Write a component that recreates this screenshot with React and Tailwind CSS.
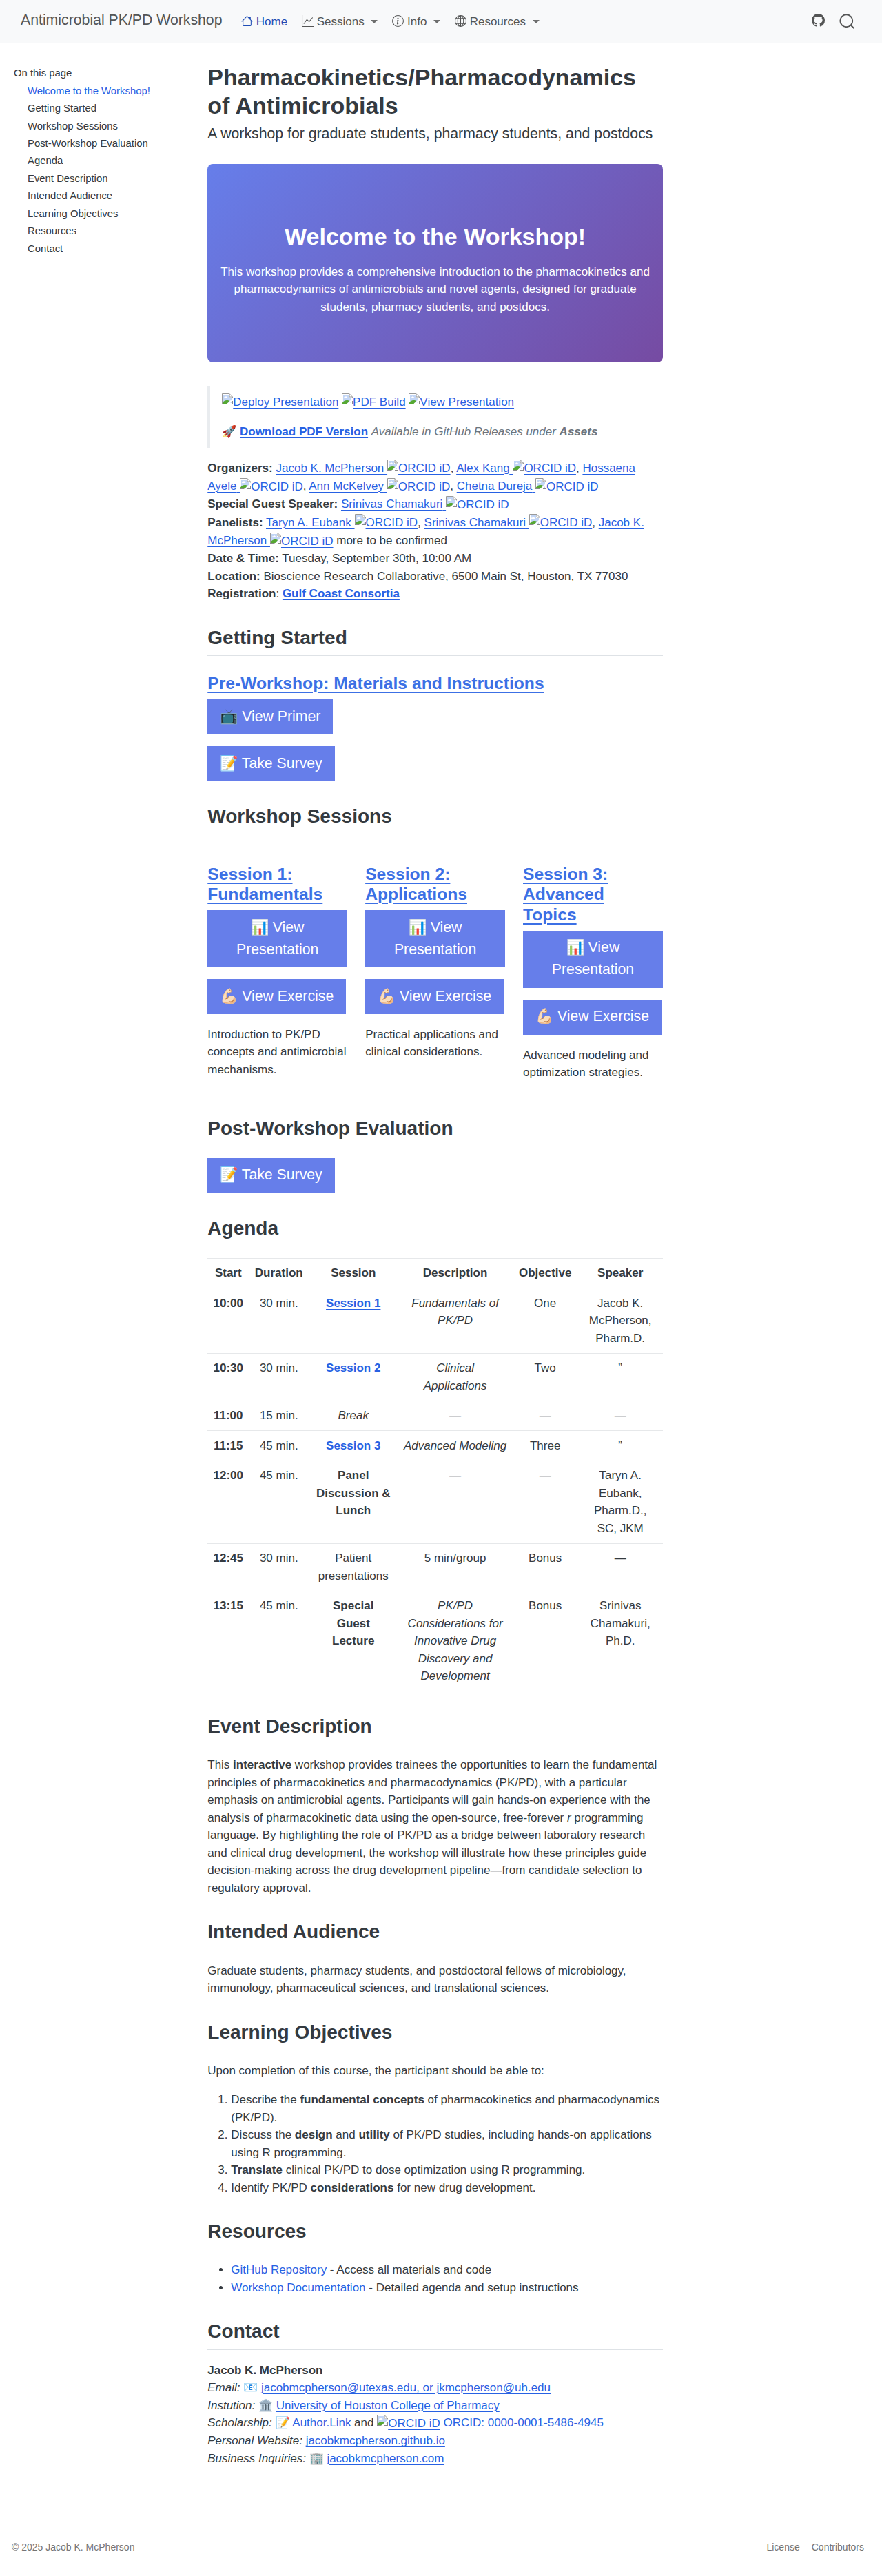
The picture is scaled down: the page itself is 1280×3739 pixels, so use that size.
import { BsHouse, BsGraphUp, BsInfoCircle, BsGlobe, BsGithub } from "react-icons/bs";

const linkCls = "text-[#2761e3] underline decoration-1 underline-offset-[3px]";

function A({ children, className = "" }) {
  return <a className={`${linkCls} ${className}`}>{children}</a>;
}

function BrokenIcon() {
  return (
    <svg width="16" height="16" viewBox="0 0 16 16" className="float-left block">
      <path d="M0 0H11L16 5V16H0Z" fill="#fff" />
      <path d="M2 2H10V6H14V14H2Z" fill="#c3d6f6" />
      <path d="M3 6.5C3 5.5 4 5.2 4.6 5.4C5 4 7 4 7.3 5.3C8.4 5.2 8.6 6.6 8 7H3.4Z" fill="#fff" />
      <path d="M1 15V13.5C2.5 11 5 9.8 7.5 10C9 10.1 10 10.4 11 11L7.5 15Z" fill="#56a832" />
      <path d="M0.5 16V0.5H11L15.5 5V6.5" fill="none" stroke="#9a9a9a" />
      <path d="M11 0.8V5H15.2" fill="none" stroke="#9a9a9a" />
      <path d="M0 15.5H6.5M11 15.5H16M15.5 11V16" fill="none" stroke="#8a8a8a" />
      <path d="M7 16L16 6.8V10L10 16Z" fill="#fff" />
    </svg>
  );
}

function Alt({ children }) {
  return (
    <span className="inline-block align-middle">
      <BrokenIcon />
      <span className={linkCls}>{children}</span>
    </span>
  );
}

function Person({ name }) {
  return (
    <>
      <A>{name} </A>
      <Alt>ORCID iD</Alt>
    </>
  );
}

function H2({ children }) {
  return (
    <h2 className="mt-[34px] mb-[17px] border-b border-[#dee2e6] pb-[8.5px] text-[28.05px] leading-[1.2] font-bold text-[#343a40]">
      {children}
    </h2>
  );
}

function H3({ children }) {
  return (
    <h3 className="mt-[25.5px] mb-[8.5px] pr-[2px] text-[24.65px] leading-[1.2] font-bold opacity-90">
      <a className="text-[#2761e3] underline decoration-2 underline-offset-[3.5px]">{children}</a>
    </h3>
  );
}

function Btn({ children }) {
  return (
    <p className="mb-[17px] flex">
      <a className="border border-[#667eea] bg-[#667eea] px-[17px] py-[8.5px] text-center text-[21.25px] leading-[1.5] text-white">
        {children}
      </a>
    </p>
  );
}

function NavItem({ Icon, label, active, caret }) {
  return (
    <a className={`flex items-center px-[10.3px] ${active ? "text-[#1f4eb6]" : "text-[#545555]"}`}>
      <Icon className="mr-[5px] mb-[2px] size-[17px]" />
      <span>{label}</span>
      {caret && (
        <span className="ml-[9.7px] border-x-[5px] border-t-[5px] border-x-transparent border-t-[#6d6e6e]" />
      )}
    </a>
  );
}

const toc = [
  "Welcome to the Workshop!",
  "Getting Started",
  "Workshop Sessions",
  "Post-Workshop Evaluation",
  "Agenda",
  "Event Description",
  "Intended Audience",
  "Learning Objectives",
  "Resources",
  "Contact",
];

const sessions = [
  ["Session 1: Fundamentals", "Introduction to PK/PD concepts and antimicrobial mechanisms."],
  ["Session 2: Applications", "Practical applications and clinical considerations."],
  ["Session 3: Advanced Topics", "Advanced modeling and optimization strategies."],
];

const agenda = [
  ["10:00", "30 min.", <A>Session 1</A>, <em>Fundamentals of PK/PD</em>, "One", "Jacob K. McPherson, Pharm.D."],
  ["10:30", "30 min.", <A>Session 2</A>, <em>Clinical Applications</em>, "Two", "”"],
  ["11:00", "15 min.", <em className="font-normal">Break</em>, "—", "—", "—"],
  ["11:15", "45 min.", <A>Session 3</A>, <em>Advanced Modeling</em>, "Three", "”"],
  ["12:00", "45 min.", "Panel Discussion & Lunch", "—", "—", "Taryn A. Eubank, Pharm.D., SC, JKM"],
  ["12:45", "30 min.", <span className="font-normal">Patient presentations</span>, "5 min/group", "Bonus", "—"],
  [
    "13:15",
    "45 min.",
    "Special Guest Lecture",
    <em>PK/PD Considerations for Innovative Drug Discovery and Development</em>,
    "Bonus",
    "Srinivas Chamakuri, Ph.D.",
  ],
];

const cellCls = ["px-0 font-bold", "px-[8.5px]", "px-[8.5px] font-bold", "px-[8.5px]", "px-[8.5px]", "px-[8.5px]"];

export default function App() {
  return (
    <div className="flex h-[3739px] flex-col bg-white font-['Liberation_Sans',Arial,sans-serif] text-[17px] leading-[1.5] text-[#343a40]">
      <header className="flex h-[62px] shrink-0 items-center bg-[#f8f9fa] pl-[30px] text-[#545555]">
        <span className="-mt-[2px] mr-[17px] text-[21.25px]">Antimicrobial PK/PD Workshop</span>
        <nav className="flex pt-[1.4px]">
          <NavItem Icon={BsHouse} label="Home" active />
          <NavItem Icon={BsGraphUp} label="Sessions" caret />
          <NavItem Icon={BsInfoCircle} label="Info" caret />
          <NavItem Icon={BsGlobe} label="Resources" caret />
        </nav>
        <div className="mr-[39px] ml-auto flex items-center gap-[20px]">
          <BsGithub className="mb-[3px] size-[19px]" />
          <svg width="24" height="24" viewBox="0 0 24 24" fill="none" stroke="currentColor" strokeWidth="1.9">
            <circle cx="11.3" cy="11.2" r="9" />
            <path d="M17.6 17.5L22.6 22.4" />
          </svg>
        </div>
      </header>

      <div className="flex grow">
        <aside className="w-[301.25px] shrink-0 pt-[33px] pl-[20px] text-[14.875px]">
          <h2 className="leading-[22px]">On this page</h2>
          <ul className="mt-[2px] ml-[13px]">
            {toc.map((t, i) => (
              <li
                key={t}
                className={`flex h-[25.47px] items-center border-l pl-[6px] ${
                  i === 0 ? "border-[#2761e3] text-[#2761e3]" : "border-[#ebebeb]"
                }`}
              >
                {t}
              </li>
            ))}
          </ul>
        </aside>

        <main className="w-[660.7px] pt-[30px]">
          <h1 className="text-[34px] leading-[1.2] font-bold">
            Pharmacokinetics/Pharmacodynamics of Antimicrobials
          </h1>
          <p className="mt-[5px] text-[21.25px] leading-[1.5]">
            A workshop for graduate students, pharmacy students, and postdocs
          </p>

          <section className="mt-[27.6px] h-[287.7px] rounded-[8px] bg-[linear-gradient(135deg,#667eea_0%,#764ba2_100%)] px-[17px] pt-[85px] text-center text-white">
            <h1 className="mb-[17.7px] text-[34px] leading-[1.2] font-bold">Welcome to the Workshop!</h1>
            <p>
              This workshop provides a comprehensive introduction to the pharmacokinetics and pharmacodynamics of
              antimicrobials and novel agents, designed for graduate students, pharmacy students, and postdocs.
            </p>
          </section>

          <blockquote className="mt-[34px] mb-[17px] border-l-[4.25px] border-[#e9ecef] py-[10.6px] pl-[17px] text-[#6c757d]">
            <p className="mb-[17px]">
              <Alt>Deploy Presentation</Alt> <Alt>PDF Build</Alt> <Alt>View Presentation</Alt>
            </p>
            <p>
              🚀 <A className="font-bold">Download PDF Version</A>{" "}
              <em>
                Available in GitHub Releases under <strong>Assets</strong>
              </em>
            </p>
          </blockquote>

          <p>
            <strong>Organizers:</strong> <Person name="Jacob K. McPherson" />, <Person name="Alex Kang" />,{" "}
            <Person name="Hossaena Ayele" />, <Person name="Ann McKelvey" />, <Person name="Chetna Dureja" />
            <br />
            <strong>Special Guest Speaker:</strong> <Person name="Srinivas Chamakuri" />
            <br />
            <strong>Panelists:</strong> <Person name="Taryn A. Eubank" />, <Person name="Srinivas Chamakuri" />,{" "}
            <Person name="Jacob K. McPherson" /> more to be confirmed
            <br />
            <strong>Date &amp; Time:</strong> Tuesday, September 30th, 10:00 AM
            <br />
            <strong>Location:</strong> Bioscience Research Collaborative, 6500 Main St, Houston, TX 77030
            <br />
            <strong>Registration</strong>: <A className="font-bold">Gulf Coast Consortia</A>
          </p>

          <H2>Getting Started</H2>
          <H3>Pre-Workshop: Materials and Instructions</H3>
          <Btn>📺 View Primer</Btn>
          <Btn>📝 Take Survey</Btn>

          <H2>Workshop Sessions</H2>
          <div className="grid grid-cols-3 gap-[26px]">
            {sessions.map(([title, text]) => (
              <div key={title}>
                <H3>{title}</H3>
                <Btn>📊 View Presentation</Btn>
                <Btn>💪🏻 View Exercise</Btn>
                <p className="mb-[17px]">{text}</p>
              </div>
            ))}
          </div>

          <H2>Post-Workshop Evaluation</H2>
          <Btn>📝 Take Survey</Btn>

          <H2>Agenda</H2>
          <table className="w-full table-fixed border-collapse border-t border-[#e6e8ea] text-center">
            <colgroup>
              <col className="w-[60px]" />
              <col className="w-[87px]" />
              <col className="w-[129px]" />
              <col className="w-[166.7px]" />
              <col className="w-[94.5px]" />
              <col className="w-[123.5px]" />
            </colgroup>
            <thead>
              <tr className="border-b border-[#b2bac1]">
                {["Start", "Duration", "Session", "Description", "Objective", "Speaker"].map((h) => (
                  <th key={h} className="py-[8.5px] font-bold">
                    {h}
                  </th>
                ))}
              </tr>
            </thead>
            <tbody>
              {agenda.map((row) => (
                <tr key={row[0]} className="border-b border-[#e6e8ea] align-top">
                  {row.map((c, i) => (
                    <td key={i} className={`py-[8.5px] ${cellCls[i]}`}>
                      {c}
                    </td>
                  ))}
                </tr>
              ))}
            </tbody>
          </table>

          <H2>Event Description</H2>
          <p>
            This <strong>interactive</strong> workshop provides trainees the opportunities to learn the fundamental
            principles of pharmacokinetics and pharmacodynamics (PK/PD), with a particular emphasis on antimicrobial
            agents. Participants will gain hands-on experience with the analysis of pharmacokinetic data using the
            open-source, free-forever <em>r</em> programming language. By highlighting the role of PK/PD as a bridge
            between laboratory research and clinical drug development, the workshop will illustrate how these
            principles guide decision-making across the drug development pipeline—from candidate selection to
            regulatory approval.
          </p>

          <H2>Intended Audience</H2>
          <p>
            Graduate students, pharmacy students, and postdoctoral fellows of microbiology, immunology, pharmaceutical
            sciences, and translational sciences.
          </p>

          <H2>Learning Objectives</H2>
          <p className="mb-[17px]">Upon completion of this course, the participant should be able to:</p>
          <ol className="list-decimal pl-[34px]">
            <li>
              Describe the <strong>fundamental concepts</strong> of pharmacokinetics and pharmacodynamics (PK/PD).
            </li>
            <li>
              Discuss the <strong>design</strong> and <strong>utility</strong> of PK/PD studies, including hands-on
              applications using R programming.
            </li>
            <li>
              <strong>Translate</strong> clinical PK/PD to dose optimization using R programming.
            </li>
            <li>
              Identify PK/PD <strong>considerations</strong> for new drug development.
            </li>
          </ol>

          <H2>Resources</H2>
          <ul className="list-disc pl-[34px]">
            <li>
              <A>GitHub Repository</A> - Access all materials and code
            </li>
            <li>
              <A>Workshop Documentation</A> - Detailed agenda and setup instructions
            </li>
          </ul>

          <H2>Contact</H2>
          <p>
            <strong>Jacob K. McPherson</strong>
            <br />
            <em>Email:</em> 📧 <A>jacobmcpherson@utexas.edu, or jkmcpherson@uh.edu</A>
            <br />
            <em>Instution:</em> 🏛️ <A>University of Houston College of Pharmacy</A>
            <br />
            <em>Scholarship:</em> 📝 <A>Author.Link</A> and <Alt>ORCID iD</Alt>
            <A> ORCID: 0000-0001-5486-4945</A>
            <br />
            <em>Personal Website:</em> <A>jacobkmcpherson.github.io</A>
            <br />
            <em>Business Inquiries:</em> 🏢 <A>jacobkmcpherson.com</A>
          </p>
        </main>
      </div>

      <footer className="flex h-[83px] shrink-0 items-center px-[17px] text-[14px] text-[#757575]">
        <span>© 2025 Jacob K. McPherson</span>
        <span className="mr-[9px] ml-auto flex gap-[17px]">
          <a>License</a>
          <a>Contributors</a>
        </span>
      </footer>
    </div>
  );
}
